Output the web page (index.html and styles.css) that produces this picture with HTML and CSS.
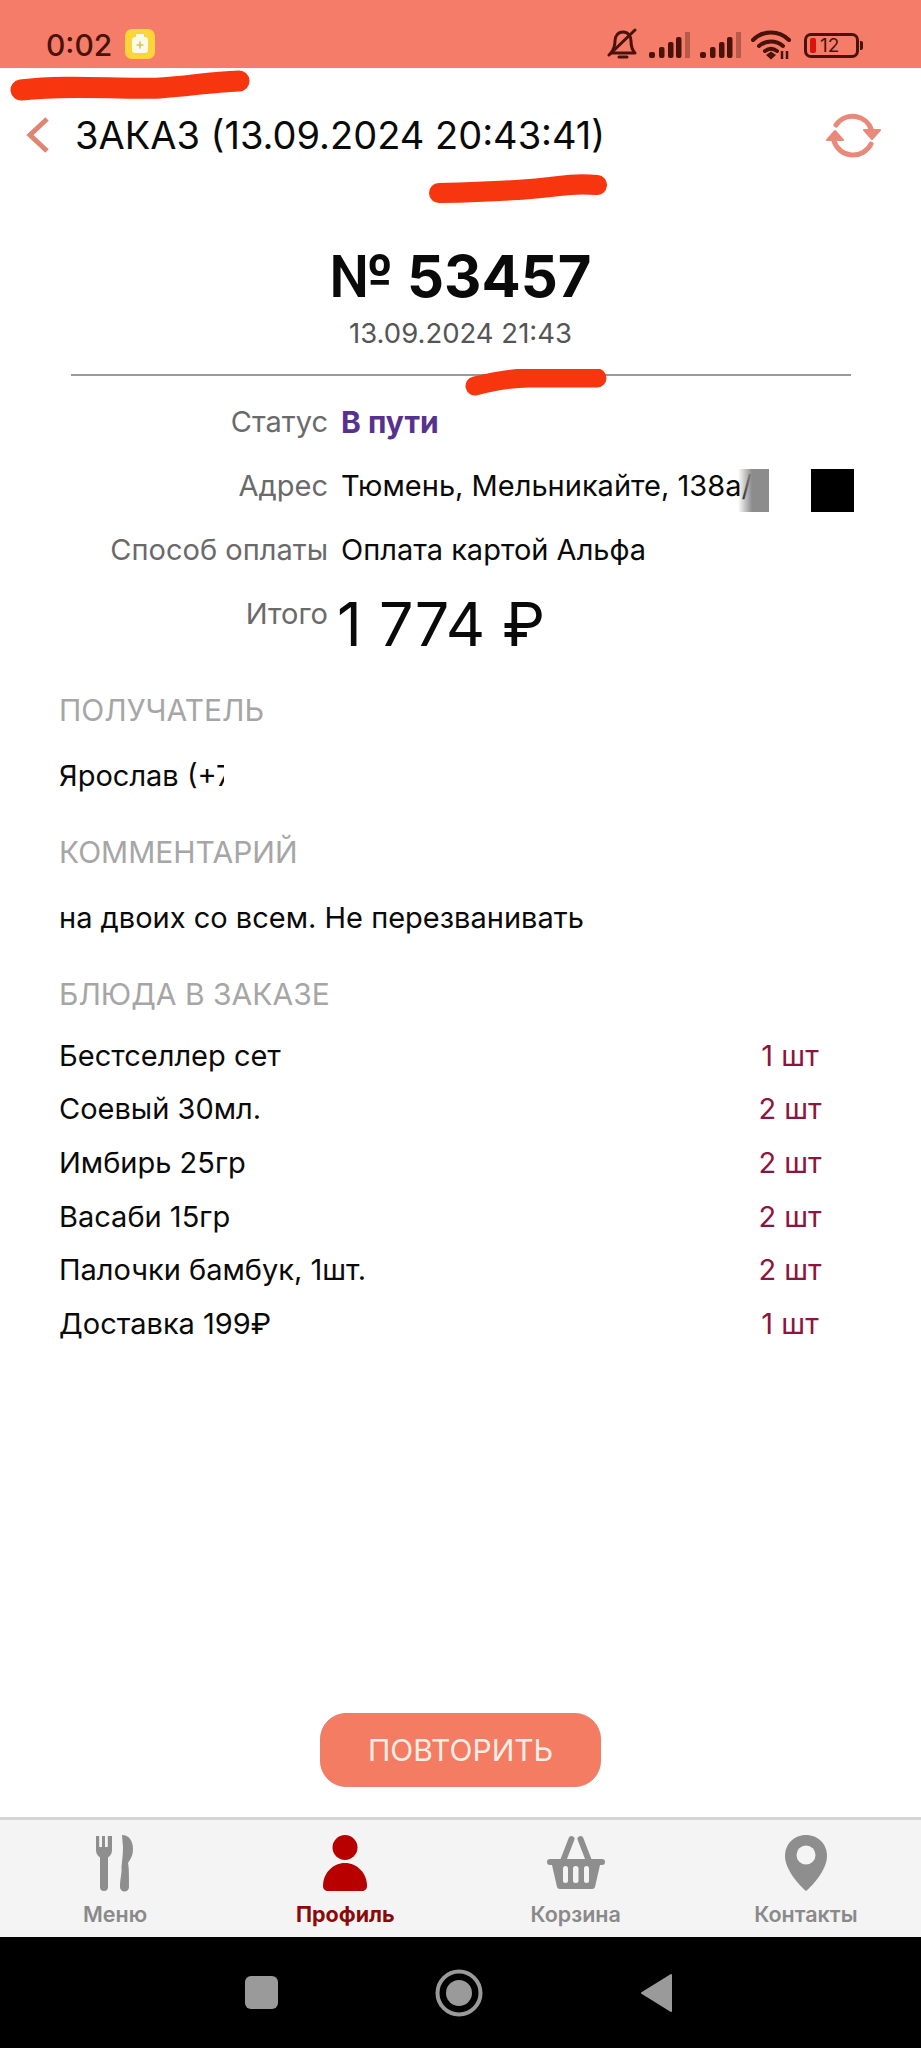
FILE: index.html
```html
<!DOCTYPE html>
<html lang="ru">
<head>
<meta charset="utf-8">
<title>Заказ</title>
<link rel="stylesheet" href="styles.css">
</head>
<body>
<div class="app">
  <div class="status">
    <span class="time">0:02</span>
    <svg class="jar" viewBox="0 0 30 30"><rect width="30" height="30" rx="7" fill="#fbd63a"/><rect x="7" y="8" width="16" height="16" rx="3" fill="#fdfbe8"/><rect x="11" y="5" width="8" height="3" fill="#fdfbe8"/><path d="M15 12.5v7M11.5 16h7" stroke="#cfc266" stroke-width="1.6"/></svg>
    <span class="status-fill"></span>
    <svg class="bell" viewBox="0 0 32 32"><path d="M16 4c-5 0-8 4-8 9 0 5-1 8-4 12h24c-3-3-4-7-4-12 0-5-3-9-8-9z" fill="none" stroke="#4a1208" stroke-width="3" stroke-linejoin="round"/><path d="M12 29h8" stroke="#4a1208" stroke-width="3" stroke-linecap="round"/><path d="M2 27 28 2" stroke="#4a1208" stroke-width="3" stroke-linecap="round"/></svg>
    <svg class="signal" viewBox="0 0 41 26"><rect x="0" y="20" width="6" height="6" rx="2" fill="#4a1208"/><rect x="10" y="15" width="5.500" height="11" rx="2" fill="#4a1208"/><rect x="19" y="10" width="5.500" height="16" rx="2" fill="#4a1208"/><rect x="27" y="5" width="5.500" height="21" rx="2" fill="#4a1208"/><rect x="36" y="0" width="5" height="26" fill="#b85a49"/></svg>
    <svg class="signal" viewBox="0 0 41 26"><rect x="0" y="20" width="6" height="6" rx="2" fill="#4a1208"/><rect x="10" y="15" width="5.500" height="11" rx="2" fill="#4a1208"/><rect x="19" y="10" width="5.500" height="16" rx="2" fill="#4a1208"/><rect x="27" y="5" width="5.500" height="21" rx="2" fill="#4a1208"/><rect x="36" y="0" width="5" height="26" fill="#b85a49"/></svg>
    <svg class="wifi" viewBox="0 0 40 30"><path d="M2 10C12 0 28 0 38 10M8 16c7-6 17-6 24 0M14 21c4-3 8-3 12 0" fill="none" stroke="#4a1208" stroke-width="4" stroke-linecap="round"/><path d="M15 25l5-3.500 5 3.500-5 4.500z" fill="#4a1208"/><path d="M31 21v8M36 21v8" stroke="#4a1208" stroke-width="2.500"/></svg>
    <div class="battery">
      <div class="battery-body"><span class="battery-level"></span><span class="battery-num">12</span></div>
      <span class="battery-nub"></span>
    </div>
  </div>

  <header class="header">
    <svg class="back" viewBox="0 0 24 38"><path d="M21 3 4 19l17 16" fill="none" stroke="#e08573" stroke-width="5"/></svg>
    <h1 class="title">ЗАКАЗ (13.09.2024 20:43:41)</h1>
    <svg class="refresh" viewBox="0 0 60 50"><g fill="none" stroke="#e8897a" stroke-width="5" stroke-linecap="round"><path d="M13 15A20 20 0 0 1 48.500 20"/><path d="M48 34A20 20 0 0 1 11 31"/></g><path d="M41 20h16l-8 9zM12 21 4 30h16z" fill="#e8897a" stroke="#e8897a" stroke-width="2" stroke-linejoin="round"/></svg>
  </header>

  <main class="main">
    <div class="number">№ 53457</div>
    <div class="date">13.09.2024 21:43</div>
    <div class="divider"></div>
    <div class="info">
      <div class="info-label">Статус</div><div class="info-value status-value">В пути</div>
      <div class="info-label">Адрес</div><div class="info-value">Тюмень, Мельникайте, 138а/</div>
      <div class="info-label">Способ оплаты</div><div class="info-value">Оплата картой Альфа</div>
      <div class="info-label">Итого</div><div class="info-total">1 774 ₽</div>
    </div>
    <section class="section">
      <h2 class="section-title">ПОЛУЧАТЕЛЬ</h2>
      <p class="section-text">Ярослав (+7</p>
      <h2 class="section-title">КОММЕНТАРИЙ</h2>
      <p class="section-text">на двоих со всем. Не перезванивать</p>
      <h2 class="section-title">БЛЮДА В ЗАКАЗЕ</h2>
      <ul class="dishes">
        <li class="dish"><span>Бестселлер сет</span><span class="qty">1 шт</span></li>
        <li class="dish"><span>Соевый 30мл.</span><span class="qty">2 шт</span></li>
        <li class="dish"><span>Имбирь 25гр</span><span class="qty">2 шт</span></li>
        <li class="dish"><span>Васаби 15гр</span><span class="qty">2 шт</span></li>
        <li class="dish"><span>Палочки бамбук, 1шт.</span><span class="qty">2 шт</span></li>
        <li class="dish"><span>Доставка 199₽</span><span class="qty">1 шт</span></li>
      </ul>
    </section>
  </main>

  <div class="actions"><button class="repeat">ПОВТОРИТЬ</button></div>

  <nav class="tabs">
    <div class="tab">
      <svg class="tab-icon" viewBox="0 0 60 60"><path d="M11 3h3.200v11H17V3h3v11h2.800V3H27v14c0 4-2 6-4 7.500V54a4 4 0 0 1-8 0V24.500c-2-1.500-4-3.500-4-7.500z" fill="#8e8e8e"/><path d="M37 2c7 0 11 6 11 14 0 7-3 11-5 14 1 5 1 11 1 24a4.500 4.500 0 0 1-9 0c0-9 2-13 1.500-20C37 28 38 22 38 14z" fill="#8e8e8e"/></svg>
      <span class="tab-label">Меню</span>
    </div>
    <div class="tab tab-active">
      <svg class="tab-icon" viewBox="0 0 60 60"><circle cx="30" cy="14.500" r="12.500" fill="#b80000"/><path d="M13 58h34c3.500 0 5-2.500 5-5C52 40 42 30 30 30S8 40 8 53c0 2.500 1.500 5 5 5z" fill="#b80000"/></svg>
      <span class="tab-label">Профиль</span>
    </div>
    <div class="tab">
      <svg class="tab-icon" viewBox="0 0 60 60"><path d="M17 28 25.500 6M34.500 6l8.500 22" stroke="#8e8e8e" stroke-width="6" stroke-linecap="round"/><path d="M4 26h52a2.500 2.500 0 0 1 0 6h-2l-5 22a3 3 0 0 1-3 2H14a3 3 0 0 1-3-2L6 32H4a2.500 2.500 0 0 1 0-6z" fill="#8e8e8e"/><g fill="#f4f4f4"><rect x="17" y="33" width="5" height="17" rx="2.500"/><rect x="27" y="33" width="5.500" height="17" rx="2.500"/><rect x="38" y="33" width="5" height="17" rx="2.500"/></g></svg>
      <span class="tab-label">Корзина</span>
    </div>
    <div class="tab">
      <svg class="tab-icon" viewBox="0 0 60 60"><path d="M30 2C18 2 9 11 9 23c0 14 15 30 21 35 6-5 21-21 21-35C51 11 42 2 30 2z" fill="#8e8e8e"/><circle cx="30" cy="22" r="9.500" fill="#f4f4f4"/></svg>
      <span class="tab-label">Контакты</span>
    </div>
  </nav>

  <div class="system-nav">
    <span class="sys-square"></span>
    <svg class="sys-circle" viewBox="0 0 48 48"><circle cx="24" cy="24" r="21.500" fill="none" stroke="#9a9a9a" stroke-width="4"/><circle cx="24" cy="24" r="13" fill="#9a9a9a"/></svg>
    <svg class="sys-back" viewBox="0 0 34 40"><path d="M31 2 2 20l29 18z" fill="#9a9a9a" stroke="#9a9a9a" stroke-width="2" stroke-linejoin="round"/></svg>
  </div>

  <svg class="scribble scribble-a" viewBox="0 0 240 31"><path d="M11 20C60 14 110 20 150 18c30-2 50-6 79-7" fill="none" stroke="#f7360f" stroke-width="21" stroke-linecap="round"/></svg>
  <svg class="scribble scribble-b" viewBox="0 0 178 30"><path d="M10 19c50-1 90-3 120-7 14-2 26-2 38-1" fill="none" stroke="#f7360f" stroke-width="20" stroke-linecap="round"/></svg>
  <svg class="scribble scribble-c" viewBox="0 0 142 28"><path d="M10 17c20-5 36-8 54-8h68" fill="none" stroke="#f7360f" stroke-width="19" stroke-linecap="round"/></svg>
  <div class="redact-grey"></div>
  <div class="redact-black"></div>
  <div class="redact-white"></div>
</div>
</body>
</html>
```

FILE: styles.css
```css
* { box-sizing: border-box; }
html, body { margin: 0; padding: 0; background: #fff; }
body { font-family: Inter, "Liberation Sans", sans-serif; color: #0a0a0a; }
.app { position: relative; width: 921px; height: 2048px; display: flex; flex-direction: column; overflow: hidden; }

.status { height: 68px; background: #f47c68; display: flex; align-items: center; padding: 22px 58px 0 46px; flex: none; }
.time { font-size: 30px; font-weight: 500; color: #4a1208; line-height: 34px; width: 79px; }
.jar { width: 30px; height: 30px; margin-top: -2px; }
.status-fill { flex: 1; }
.bell { width: 32px; height: 32px; margin-right: 10px; margin-top: -2px; }
.signal { width: 41px; height: 26px; margin-right: 10px; }
.wifi { width: 40px; height: 30px; margin-right: 13px; }
.battery { display: flex; align-items: center; }
.battery-body { width: 55px; height: 25px; border: 3px solid #4a1208; border-radius: 7px; display: flex; align-items: center; padding-left: 3px; }
.battery-level { width: 6px; height: 15px; background: #d8140c; border-radius: 2px; }
.battery-num { font-size: 19px; color: #4a1208; margin-left: 4px; line-height: 19px; }
.battery-nub { width: 3px; height: 9px; background: #4a1208; border-radius: 0 2px 2px 0; margin-left: 1px; }

.header { height: 134px; flex: none; display: flex; align-items: center; padding: 0 38px 0 26px; }
.back { width: 24px; height: 38px; flex: none; margin-right: 25px; }
.title { flex: 1; margin: 0; font-size: 38px; font-weight: 400; line-height: 44px; white-space: nowrap; }
.refresh { width: 60px; height: 50px; flex: none; }

.main { flex: 1; padding: 0 59px; }
.number { margin-top: 42px; text-align: center; font-size: 58px; font-weight: 700; line-height: 64px; }
.date { margin-top: 5px; text-align: center; font-size: 27.500px; line-height: 40px; color: #555; }
.divider { height: 1.5px; background: #9a9a9a; margin: 21px 11px 0 12px; }

.info { margin-top: 26px; display: grid; grid-template-columns: 269px 1fr; column-gap: 13px; row-gap: 24px; align-items: start; }
.info-label { text-align: right; font-size: 29px; line-height: 40px; color: #6a6a6a; }
.info-value { font-size: 29px; line-height: 40px; color: #0a0a0a; white-space: nowrap; }
.status-value { color: #56318f; font-weight: 700; font-size: 30px; }
.info-total { font-size: 61px; line-height: 60px; font-weight: 400; margin-left: -4px; }

.section { margin-top: 36px; }
.section-title { margin: 36px 0 0; font-size: 30px; font-weight: 400; line-height: 40px; color: #a6a6a6; }
.section-title:first-child { margin-top: 0; }
.section-text { margin: 26px 0 0; font-size: 29px; line-height: 40px; }
.dishes { list-style: none; margin: 22px 0 0; padding: 0; display: flex; flex-direction: column; row-gap: 13.700px; }
.dish { display: flex; justify-content: space-between; font-size: 29px; line-height: 40px; padding-right: 37px; }
.qty { color: #8c1540; width: 70px; text-align: center; }

.actions { display: flex; justify-content: center; padding-bottom: 30px; flex: none; }
.repeat { width: 281px; height: 74px; border: 1px solid #e8806a; border-radius: 26px; background: #f47c62; color: #fbeee8; font-family: inherit; font-size: 30px; }

.tabs { height: 120px; flex: none; border-top: 3px solid #d4d4d4; background: #f4f4f4; display: grid; grid-template-columns: repeat(4, 1fr); }
.tab { display: flex; flex-direction: column; align-items: center; padding-top: 13px; color: #8a8a8a; }
.tab-icon { width: 60px; height: 60px; display: block; }
.tab-label { font-size: 21.500px; font-weight: 600; line-height: 24px; margin-top: 9px; }
.tab-active { color: #8a0a0a; }
.tab-active .tab-label { font-weight: 700; }

.system-nav { height: 111px; flex: none; background: #000; display: flex; align-items: center; padding: 0 247px 0 245px; justify-content: space-between; }
.sys-square { width: 33px; height: 33px; background: #9a9a9a; border-radius: 6px; }
.sys-circle { width: 48px; height: 48px; }
.sys-back { width: 34px; height: 40px; }

.scribble { position: absolute; display: block; }
.scribble-a { left: 10px; top: 70px; width: 240px; height: 31px; }
.scribble-b { left: 429px; top: 174px; width: 178px; height: 30px; }
.scribble-c { left: 465px; top: 369px; width: 142px; height: 28px; }
.redact-grey { position: absolute; left: 738px; top: 469px; width: 31px; height: 43px; background: linear-gradient(90deg, rgba(140,140,140,0) 0, #8c8c8c 45%); }
.redact-black { position: absolute; left: 811px; top: 469px; width: 43px; height: 43px; background: #000; }
.redact-white { position: absolute; left: 224px; top: 755px; width: 120px; height: 40px; background: #fff; }
```
